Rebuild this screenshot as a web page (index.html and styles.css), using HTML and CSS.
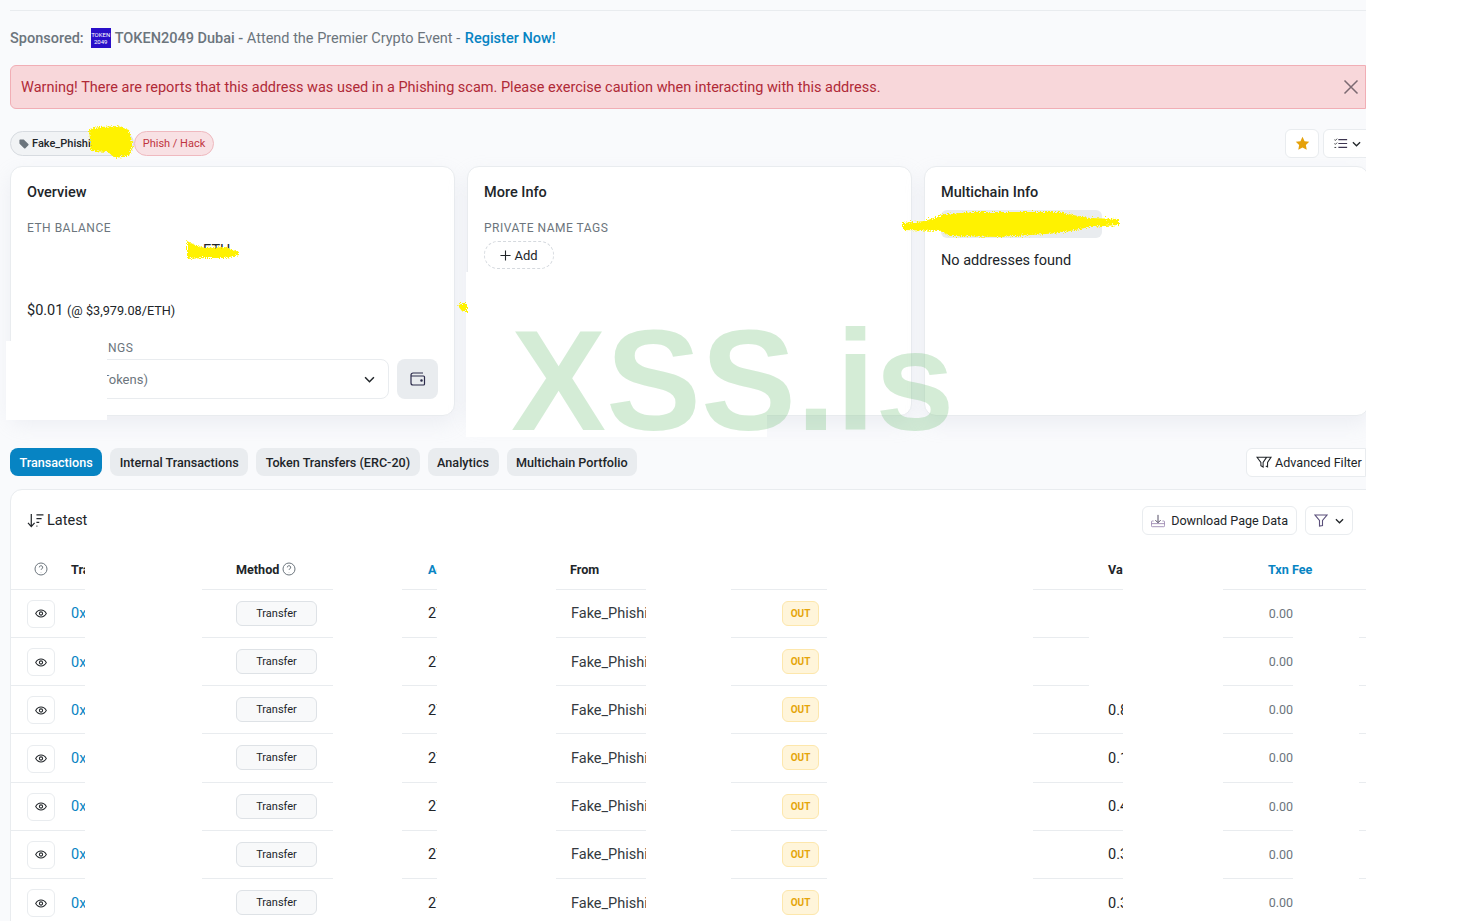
FILE: index.html
```html
<!DOCTYPE html>
<html lang="en">
<head>
<meta charset="utf-8">
<title>Address</title>
<link rel="stylesheet" href="styles.css">
</head>
<body>
<div class="page">
  <div class="topline"></div>
  <p class="sponsor"><b class="sp-label">Sponsored:</b><span class="sp-logo">TOKEN<br>2049</span><b class="sp-name">TOKEN2049 Dubai -</b> Attend the Premier Crypto Event - <a class="sp-link">Register Now!</a></p>

  <div class="alert">
    <span>Warning! There are reports that this address was used in a Phishing scam. Please exercise caution when interacting with this address.</span>
    <svg class="alert-x" viewBox="0 0 16 16"><path d="M1.500 1.500l13 13M14.500 1.500l-13 13"/></svg>
  </div>

  <div class="tagrow">
    <span class="pill pill-grey"><svg class="tag-ic" viewBox="0 0 12 12"><path d="M.5 1.600C.5 1 1 .5 1.600.5h3.600c.3 0 .6.1.8.3l5.200 5.200c.5.5.5 1.100 0 1.600l-3.500 3.500c-.5.5-1.100.5-1.600 0L.9 5.900C.6 5.700.5 5.400.5 5.100z"/></svg>Fake_Phishing</span>
    <span class="pill pill-red">Phish / Hack</span>
    <span class="tag-actions">
      <span class="iconbtn star"><svg viewBox="0 0 16 16"><path d="M8 .9l2.200 4.600 5 .7-3.600 3.500.9 5L8 12.300l-4.500 2.400.9-5L.8 6.200l5-.7z"/></svg></span>
      <span class="iconbtn listbtn"><svg class="list-ic" viewBox="0 0 16 12"><path class="chk" d="M.5 1.500l1 1 2-2M.5 6l1 1 2-2M.5 10.500h2"/><path d="M5 1.500h10M5 6h10M5 10.500h10"/></svg><svg class="chev" viewBox="0 0 10 6"><path d="M1 1l4 4 4-4"/></svg></span>
    </span>
  </div>

  <div class="cards">
    <section class="card">
      <h2 class="card-title">Overview</h2>
      <div class="label">ETH BALANCE</div>
      <div class="balance">ETH</div>
      <div class="usd">$0.01 <small>(@ $3,979.08/ETH)</small></div>
      <div class="label holdings">TOKEN HOLDINGS</div>
      <div class="hold-row">
        <div class="select"><span>$0.00 (1 Tokens)</span><svg class="chev chev-big" viewBox="0 0 10 6"><path d="M1 1l4 4 4-4"/></svg></div>
        <span class="wallet"><svg viewBox="0 0 16 14"><path d="M13 1H3a2 2 0 0 0-2 2v8a2 2 0 0 0 2 2h10.500a1 1 0 0 0 1-1V5a1 1 0 0 0-1-1H1.500"/><circle cx="11.500" cy="8.500" r=".7"/></svg></span>
      </div>
    </section>
    <section class="card">
      <h2 class="card-title">More Info</h2>
      <div class="label">PRIVATE NAME TAGS</div>
      <span class="addbtn"><svg viewBox="0 0 12 12"><path d="M6 .5v11M.5 6h11"/></svg>Add</span>
    </section>
    <section class="card">
      <h2 class="card-title">Multichain Info</h2>
      <div class="greypill"></div>
      <div class="noaddr">No addresses found</div>
    </section>
  </div>

  <div class="tabs">
    <span class="tab tab-on">Transactions</span>
    <span class="tab">Internal Transactions</span>
    <span class="tab">Token Transfers (ERC-20)</span>
    <span class="tab">Analytics</span>
    <span class="tab">Multichain Portfolio</span>
    <span class="advfilter"><svg viewBox="0 0 18 14"><path d="M1 1h11L8 7v5L5.500 10.500V7zM12 1h5l-4 6v5l-2-1"/></svg>Advanced Filter</span>
  </div>

  <section class="tablecard">
    <div class="tablehead">
      <div class="latest"><svg class="sort-ic" viewBox="0 0 18 16"><path d="M4.500 1v13M1 10.500L4.500 14.500 8 10.500M10 2h7.500M10 6h5.500M10 10h3M10 14h1"/></svg>Latest</div>
      <div class="tableactions">
        <span class="btn"><svg class="dl-ic" viewBox="0 0 16 15"><path class="tray" d="M3 7.500H1.500a1 1 0 0 0-1 1v4.500a1 1 0 0 0 1 1h13a1 1 0 0 0 1-1V8.500a1 1 0 0 0-1-1H13M.5 10.500h15"/><path d="M8 .5v8.500M5 6.500L8 9.500l3-3"/></svg>Download Page Data</span>
        <span class="btn btn-f"><svg class="fn-ic" viewBox="0 0 14 13"><path d="M1 1h12L8.500 6.500v5L5.500 12V6.500z"/></svg><svg class="chev" viewBox="0 0 10 6"><path d="M1 1l4 4 4-4"/></svg></span>
      </div>
    </div>

    <div class="row headrow">
      <div class="c c-txn"><svg class="q q-first" viewBox="0 0 14 14"><circle cx="7" cy="7" r="6"/><path d="M5.300 5.400a1.700 1.700 0 1 1 2.500 1.500c-.5.300-.8.600-.8 1.100M7 10v.3"/></svg><span class="th">Transaction Hash</span></div>
      <div class="gap"></div>
      <div class="c c-method"><span class="th">Method</span><svg class="q" viewBox="0 0 14 14"><circle cx="7" cy="7" r="6"/><path d="M5.300 5.400a1.700 1.700 0 1 1 2.500 1.500c-.5.300-.8.600-.8 1.100M7 10v.3"/></svg></div>
      <div class="gap"></div>
      <div class="c c-age"><span class="th th-blue">Age</span></div>
      <div class="gap"></div>
      <div class="c c-from"><span class="th">From</span></div>
      <div class="gap"></div>
      <div class="c c-out"></div>
      <div class="gap"></div>
      <div class="c c-val c-span2"><span class="th">Value</span></div>
      <div class="gap"></div>
      <div class="c c-fee c-span3"><span class="th th-blue">Txn Fee</span></div>
    </div>

    <div class="row">
      <div class="c c-txn"><span class="eye"><svg viewBox="0 0 14 10"><path d="M.8 5C2.300 2.300 4.500 1 7 1s4.700 1.300 6.200 4C11.700 7.700 9.500 9 7 9S2.300 7.700.8 5z"/><circle cx="7" cy="5" r="1.900"/></svg></span><a class="hash">0x</a></div>
      <div class="gap"></div>
      <div class="c c-method"><span class="method">Transfer</span></div>
      <div class="gap"></div>
      <div class="c c-age"><span class="tx">27 days</span></div>
      <div class="gap"></div>
      <div class="c c-from"><span class="tx tx-from">Fake_Phishing</span></div>
      <div class="gap"></div>
      <div class="c c-out"><span class="out">OUT</span></div>
      <div class="gap"></div>
      <div class="c c-val1"></div><div class="gap"></div>
      <div class="gap"></div>
      <div class="c c-fee"><span class="fee">0.00</span></div>
      <div class="gap"></div>
      <div class="c"></div>
    </div>
    <div class="row">
      <div class="c c-txn"><span class="eye"><svg viewBox="0 0 14 10"><path d="M.8 5C2.300 2.300 4.500 1 7 1s4.700 1.300 6.200 4C11.700 7.700 9.500 9 7 9S2.300 7.700.8 5z"/><circle cx="7" cy="5" r="1.900"/></svg></span><a class="hash">0x</a></div>
      <div class="gap"></div>
      <div class="c c-method"><span class="method">Transfer</span></div>
      <div class="gap"></div>
      <div class="c c-age"><span class="tx">27 days</span></div>
      <div class="gap"></div>
      <div class="c c-from"><span class="tx tx-from">Fake_Phishing</span></div>
      <div class="gap"></div>
      <div class="c c-out"><span class="out">OUT</span></div>
      <div class="gap"></div>
      <div class="c c-val1"></div><div class="gap"></div>
      <div class="gap"></div>
      <div class="c c-fee"><span class="fee">0.00</span></div>
      <div class="gap"></div>
      <div class="c"></div>
    </div>
    <div class="row">
      <div class="c c-txn"><span class="eye"><svg viewBox="0 0 14 10"><path d="M.8 5C2.300 2.300 4.500 1 7 1s4.700 1.300 6.200 4C11.700 7.700 9.500 9 7 9S2.300 7.700.8 5z"/><circle cx="7" cy="5" r="1.900"/></svg></span><a class="hash">0x</a></div>
      <div class="gap"></div>
      <div class="c c-method"><span class="method">Transfer</span></div>
      <div class="gap"></div>
      <div class="c c-age"><span class="tx">27 days</span></div>
      <div class="gap"></div>
      <div class="c c-from"><span class="tx tx-from">Fake_Phishing</span></div>
      <div class="gap"></div>
      <div class="c c-out"><span class="out">OUT</span></div>
      <div class="gap"></div>
      <div class="c c-val c-span2"><span class="tx">0.8 ETH</span></div>
      <div class="gap"></div>
      <div class="c c-fee"><span class="fee">0.00</span></div>
      <div class="gap"></div>
      <div class="c"></div>
    </div>
    <div class="row">
      <div class="c c-txn"><span class="eye"><svg viewBox="0 0 14 10"><path d="M.8 5C2.300 2.300 4.500 1 7 1s4.700 1.300 6.200 4C11.700 7.700 9.500 9 7 9S2.300 7.700.8 5z"/><circle cx="7" cy="5" r="1.900"/></svg></span><a class="hash">0x</a></div>
      <div class="gap"></div>
      <div class="c c-method"><span class="method">Transfer</span></div>
      <div class="gap"></div>
      <div class="c c-age"><span class="tx">27 days</span></div>
      <div class="gap"></div>
      <div class="c c-from"><span class="tx tx-from">Fake_Phishing</span></div>
      <div class="gap"></div>
      <div class="c c-out"><span class="out">OUT</span></div>
      <div class="gap"></div>
      <div class="c c-val c-span2"><span class="tx">0.1 ETH</span></div>
      <div class="gap"></div>
      <div class="c c-fee"><span class="fee">0.00</span></div>
      <div class="gap"></div>
      <div class="c"></div>
    </div>
    <div class="row">
      <div class="c c-txn"><span class="eye"><svg viewBox="0 0 14 10"><path d="M.8 5C2.300 2.300 4.500 1 7 1s4.700 1.300 6.200 4C11.700 7.700 9.500 9 7 9S2.300 7.700.8 5z"/><circle cx="7" cy="5" r="1.900"/></svg></span><a class="hash">0x</a></div>
      <div class="gap"></div>
      <div class="c c-method"><span class="method">Transfer</span></div>
      <div class="gap"></div>
      <div class="c c-age"><span class="tx">27 days</span></div>
      <div class="gap"></div>
      <div class="c c-from"><span class="tx tx-from">Fake_Phishing</span></div>
      <div class="gap"></div>
      <div class="c c-out"><span class="out">OUT</span></div>
      <div class="gap"></div>
      <div class="c c-val c-span2"><span class="tx">0.4 ETH</span></div>
      <div class="gap"></div>
      <div class="c c-fee"><span class="fee">0.00</span></div>
      <div class="gap"></div>
      <div class="c"></div>
    </div>
    <div class="row">
      <div class="c c-txn"><span class="eye"><svg viewBox="0 0 14 10"><path d="M.8 5C2.300 2.300 4.500 1 7 1s4.700 1.300 6.200 4C11.700 7.700 9.500 9 7 9S2.300 7.700.8 5z"/><circle cx="7" cy="5" r="1.900"/></svg></span><a class="hash">0x</a></div>
      <div class="gap"></div>
      <div class="c c-method"><span class="method">Transfer</span></div>
      <div class="gap"></div>
      <div class="c c-age"><span class="tx">27 days</span></div>
      <div class="gap"></div>
      <div class="c c-from"><span class="tx tx-from">Fake_Phishing</span></div>
      <div class="gap"></div>
      <div class="c c-out"><span class="out">OUT</span></div>
      <div class="gap"></div>
      <div class="c c-val c-span2"><span class="tx">0.3 ETH</span></div>
      <div class="gap"></div>
      <div class="c c-fee"><span class="fee">0.00</span></div>
      <div class="gap"></div>
      <div class="c"></div>
    </div>
    <div class="row">
      <div class="c c-txn"><span class="eye"><svg viewBox="0 0 14 10"><path d="M.8 5C2.300 2.300 4.500 1 7 1s4.700 1.300 6.200 4C11.700 7.700 9.500 9 7 9S2.300 7.700.8 5z"/><circle cx="7" cy="5" r="1.900"/></svg></span><a class="hash">0x</a></div>
      <div class="gap"></div>
      <div class="c c-method"><span class="method">Transfer</span></div>
      <div class="gap"></div>
      <div class="c c-age"><span class="tx">27 days</span></div>
      <div class="gap"></div>
      <div class="c c-from"><span class="tx tx-from">Fake_Phishing</span></div>
      <div class="gap"></div>
      <div class="c c-out"><span class="out">OUT</span></div>
      <div class="gap"></div>
      <div class="c c-val c-span2"><span class="tx">0.3 ETH</span></div>
      <div class="gap"></div>
      <div class="c c-fee"><span class="fee">0.00</span></div>
      <div class="gap"></div>
      <div class="c"></div>
    </div>
  </section>

  <div class="patch patch-a"></div>
  <div class="patch patch-b"></div>
  <div class="watermark">XSS.is</div>
  <svg class="scribbles" viewBox="0 0 1366 921">
    <defs>
      <filter id="rough" x="-10%" y="-30%" width="120%" height="160%">
        <feTurbulence type="fractalNoise" baseFrequency="0.8" numOctaves="3" seed="4"/>
        <feDisplacementMap in="SourceGraphic" scale="6"/>
      </filter>
    </defs>
    <g class="scrib">
      <path d="M89 129L100 127L118 126L129 130L133 145L129 156L115 158L108 152L91 151Z"/>
      <path d="M187 241L195 245L205 248L225 247L239 252L239 255L225 258L205 258L187 259Z"/>
      <path d="M903 223L925 221L945 214L975 212L1060 212L1078 216L1090 218L1119 219L1119 225L1090 227L1060 233L1000 237L950 236L940 231L903 230Z"/>
      <path d="M458 306L462 303L467 303L467 311L462 311Z"/>
    </g>
  </svg>
</div>
</body>
</html>
```

FILE: styles.css
```css
* { box-sizing: border-box; }
html, body { margin: 0; padding: 0; background: #fff; }
body { font-family: Roboto, "Liberation Sans", sans-serif; color: #212529; overflow: hidden; }

.page {
  position: relative;
  width: 1366px;
  height: 921px;
  overflow: hidden;
  padding: 10px 0 0 10px;
  background: #f9fafc;
  font-size: 14.5px;
}

.topline { height: 1px; background: #e9ecef; }

.sponsor {
  display: flex;
  align-items: center;
  height: 22px;
  margin: 16px 0 0;
  color: #6c757d;
  font-size: 14.5px;
  white-space: pre;
}
.sp-label, .sp-name { font-weight: 500; color: #6c757d; }
.sp-logo {
  display: block;
  width: 20px;
  height: 20px;
  margin: 0 4px 0 7px;
  padding-top: 3px;
  background: #2a0fc9;
  color: #fff;
  font-size: 6px;
  line-height: 7px;
  text-align: center;
}
.sp-link { margin-left: 1px; color: #0784c3; font-weight: 500; }

.alert {
  display: flex;
  align-items: center;
  justify-content: space-between;
  height: 44px;
  margin-top: 16px;
  padding: 0 6px 0 10px;
  background: #f8d7da;
  border: 1px solid #f1aeb5;
  border-radius: 6px 0 0 6px;
  color: #b02a37;
  font-size: 14.5px;
}
.alert-x { width: 16px; height: 16px; fill: none; stroke: #7b6a72; stroke-width: 1.500; }

.tagrow { display: flex; align-items: center; height: 29px; margin-top: 20px; margin-right: -7px; }
.pill {
  display: inline-flex;
  align-items: center;
  height: 25px;
  border-radius: 13px;
  font-size: 11px;
  font-weight: 500;
  white-space: nowrap;
}
.pill-grey {
  width: 124px;
  overflow: hidden;
  padding-left: 8px;
  background: #f1f3f5;
  border: 1px solid #d7dbe0;
  color: #212529;
}
.tag-ic { width: 10px; height: 10px; margin-right: 3px; fill: #6c757d; }
.pill-red {
  justify-content: center;
  width: 80px;
  background: #f8e1e4;
  border: 1px solid #efb9bf;
  color: #c0343e;
  font-weight: 400;
}
.tag-actions { display: flex; gap: 4px; margin-left: auto; }
.iconbtn {
  display: flex;
  align-items: center;
  height: 29px;
  background: #fff;
  border: 1px solid #e9ecef;
  border-radius: 6px;
}
.star { justify-content: center; width: 34px; }
.star svg { width: 15px; height: 15px; fill: #e5a10b; }
.listbtn { width: 50px; padding-left: 10px; gap: 4px; }
.list-ic { width: 14px; height: 11px; fill: none; stroke: #3d3550; stroke-width: 1.300; }
.list-ic .chk { stroke: #212529; stroke-width: 1; }
.chev { width: 9px; height: 6px; fill: none; stroke: #212529; stroke-width: 1.400; }
.chev-big { width: 11px; height: 7px; }

.cards { display: grid; grid-template-columns: 445px 445px 445px; gap: 12px; margin-top: 8px; }
.card {
  height: 250px;
  padding: 17px 16px 16px;
  background: #fff;
  border: 1px solid #e9ecef;
  border-radius: 12px;
  box-shadow: 0 8px 20px rgba(189, 197, 209, .2);
}
.card-title { margin: 0; font-size: 14.500px; line-height: 18px; font-weight: 500; color: #212529; }
.label { margin-top: 19px; font-size: 12px; line-height: 14px; letter-spacing: .5px; color: #6c757d; }
.balance { height: 18px; margin-top: 7px; padding-left: 176px; font-size: 14.500px; line-height: 18px; color: #212529; }
.usd { margin-top: 42px; font-size: 14.500px; line-height: 18px; color: #212529; }
.usd small { font-size: 12.700px; }
.holdings { margin-top: 21px; }
.hold-row { display: flex; gap: 8px; margin-top: 4px; }
.select {
  display: flex;
  align-items: center;
  justify-content: space-between;
  width: 362px;
  height: 40px;
  padding: 0 13px 0 23px;
  background: #fff;
  border: 1px solid #e9ecef;
  border-radius: 8px;
  color: #6c757d;
  font-size: 13px;
}
.wallet {
  display: flex;
  align-items: center;
  justify-content: center;
  width: 41px;
  height: 40px;
  background: #e9ecef;
  border-radius: 8px;
}
.wallet svg { width: 16px; height: 14px; fill: none; stroke: #2b2a4a; stroke-width: 1.200; }

.addbtn {
  display: inline-flex;
  align-items: center;
  justify-content: center;
  gap: 3px;
  width: 70px;
  height: 28px;
  margin-top: 6px;
  border: 1px dashed #d5d9de;
  border-radius: 14px;
  font-size: 13px;
}
.addbtn svg { width: 11px; height: 11px; fill: none; stroke: #212529; stroke-width: 1.200; }

.greypill { width: 161px; height: 28px; margin-top: 8px; background: #e9ecef; border-radius: 6px; }
.noaddr { margin-top: 14px; font-size: 14.500px; line-height: 18px; }

.tabs { display: flex; align-items: flex-start; gap: 8px; height: 29px; margin-top: 32px; }
.tab {
  display: flex;
  align-items: center;
  height: 28px;
  padding: 0 9.500px;
  background: #e9ecef;
  border-radius: 8px;
  font-size: 12.600px;
  font-weight: 500;
  white-space: nowrap;
}
.tab-on { background: #0784c3; color: #fff; }
.advfilter {
  display: flex;
  align-items: center;
  gap: 3px;
  width: 120px;
  height: 29px;
  margin-left: auto;
  padding-left: 9px;
  background: #fff;
  border: 1px solid #e9ecef;
  border-radius: 6px 0 0 6px;
  font-size: 12.600px;
  white-space: nowrap;
}
.advfilter svg { flex: none; width: 16px; height: 13px; fill: none; stroke: #212529; stroke-width: 1.200; }

.tablecard {
  width: 1370px;
  height: 460px;
  margin-top: 12px;
  background: #fff;
  border: 1px solid #e9ecef;
  border-radius: 12px;
}
.tablehead { display: flex; align-items: center; justify-content: space-between; height: 61px; padding: 0 16px; }
.latest { display: flex; align-items: center; gap: 3px; font-size: 14.500px; }
.sort-ic { width: 17px; height: 15px; fill: none; stroke: #212529; stroke-width: 1.300; }
.tableactions { display: flex; gap: 8px; margin-right: 10px; }
.btn {
  display: flex;
  align-items: center;
  height: 29px;
  padding: 0 8px;
  background: #fff;
  border: 1px solid #e9ecef;
  border-radius: 6px;
  font-size: 12.600px;
}
.dl-ic { width: 14px; height: 14px; margin-right: 6px; fill: none; stroke: #3d3550; stroke-width: 1; }
.dl-ic .tray { stroke: #9a86b0; }
.btn-f { width: 48px; gap: 7px; }
.fn-ic { width: 14px; height: 13px; fill: none; stroke: #5a4f7a; stroke-width: 1.100; }

.row {
  display: grid;
  grid-template-columns: 74px 117px 131px 69px 35px 119px 90px 85px 96px 206px 56px 34px 100px 70px 66px 41px;
  height: 48.200px;
}
.headrow { height: 38.800px; }
.c {
  display: flex;
  align-items: center;
  overflow: hidden;
  border-bottom: 1px solid #e9ecef;
  white-space: nowrap;
  min-width: 0;
}
.headrow .c { padding-bottom: 1px; }
.c-txn { padding: 1.200px 0 0 16px; }
.c-age, .c-from, .c-val { padding-top: 1.200px; }
.headrow .c-txn { padding: 0 0 1px 23px; }
.headrow .c-age, .headrow .c-from, .headrow .c-val { padding-top: 0; }
.c-method { padding-left: 34px; }
.c-age { padding-left: 26px; }
.c-from { padding-left: 15px; }
.headrow .c-from { padding-left: 14px; }
.c-out { justify-content: flex-end; padding-right: 8px; }
.c-val { padding-left: 75px; }
.c-span2 { grid-column: span 2; }
.c-span3 { grid-column: span 3; }
.c-fee { justify-content: flex-end; }
.c-span3 { justify-content: flex-start; padding-left: 45px; }

.th { font-size: 12.600px; font-weight: 700; color: #212529; }
.th-blue { color: #0784c3; }
.q { flex: none; width: 14px; height: 14px; margin-left: 3px; fill: none; stroke: #6c757d; stroke-width: 1; }
.q-first { margin: 0 23px 0 0; }

.eye {
  display: flex;
  flex: none;
  align-items: center;
  justify-content: center;
  width: 28px;
  height: 28px;
  margin-right: 16px;
  border: 1px solid #e9ecef;
  border-radius: 6px;
}
.eye svg { width: 12px; height: 9px; fill: none; stroke: #212529; stroke-width: 1.200; }
.hash { color: #0784c3; font-size: 14.500px; }
.method {
  display: flex;
  align-items: center;
  justify-content: center;
  width: 81px;
  height: 25px;
  background: #f8f9fa;
  border: 1px solid #dee2e6;
  border-radius: 6px;
  font-size: 11px;
}
.tx { font-size: 14.500px; }
.tx-from { color: #343a40; }
.out {
  display: flex;
  align-items: center;
  justify-content: center;
  width: 37px;
  height: 25px;
  background: #fff5da;
  border: 1px solid #fde7ac;
  border-radius: 6px;
  color: #e5a50a;
  font-size: 10px;
  font-weight: 700;
}
.fee { font-size: 12.500px; color: #6c757d; }

.patch { position: absolute; background: #fff; }
.patch-a { left: 6px; top: 341px; width: 101px; height: 79px; }
.patch-b { left: 466px; top: 272px; width: 301px; height: 165px; }

.watermark {
  position: absolute;
  left: 511px;
  top: 321px;
  font-family: "Liberation Sans", Arial, sans-serif;
  font-size: 142.500px;
  font-weight: 700;
  line-height: 120px;
  color: rgba(116, 193, 124, .31);
  white-space: nowrap;
}

.scribbles { position: absolute; left: 0; top: 0; width: 1366px; height: 921px; pointer-events: none; }
.scrib { fill: #fff200; filter: url(#rough); }
```
